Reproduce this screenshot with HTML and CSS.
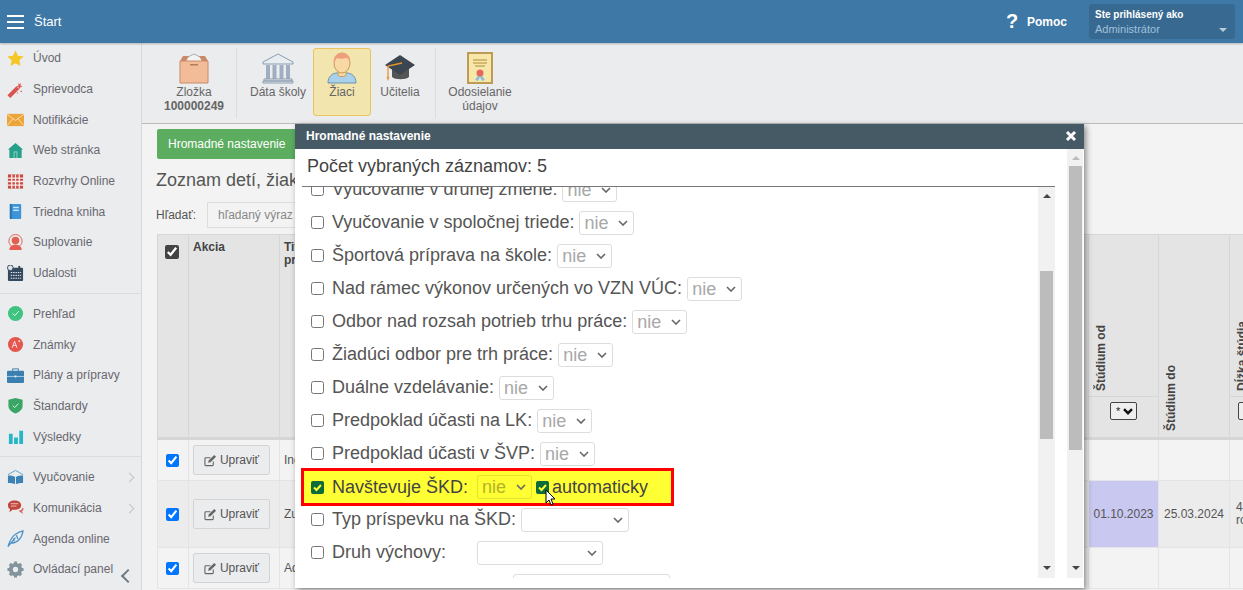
FILE: index.html
```html
<!DOCTYPE html>
<html lang="sk">
<head>
<meta charset="utf-8">
<title>Štart</title>
<link rel="stylesheet" href="styles.css">
</head>
<body>
<header class="topbar">
  <div class="burger"><span></span><span></span><span></span></div>
  <div class="brand">Štart</div>
  <div class="help"><b>?</b><span>Pomoc</span></div>
  <div class="user">
    <div class="user-top">Ste prihlásený ako</div>
    <div class="user-name">Administrátor</div>
    <i class="caret"></i>
  </div>
</header>
<div class="main">
  <nav class="side">
    <a class="nav"><svg viewBox="0 0 18 18"><path fill="#f5c724" d="M9 .5l2.600 5.600 6 .7-4.500 4.100 1.200 6L9 14l-5.300 2.900 1.200-6L.4 6.800l6-.7z"/></svg>Úvod</a>
    <a class="nav"><svg viewBox="0 0 18 18"><path fill="#d9534f" d="M.5 15L10 5.500l3 3L3.500 18z"/><path fill="#e8574d" d="M12 1l.8 2.500L15 2.500l-.8 2.300 2.300.8-2.300 1-1 2-1-2-2-.8 2-1zM15 10l1 1-1 1-1-1zM11 12l.8.8-.8.8-.8-.8z"/></svg>Sprievodca</a>
    <a class="nav"><svg viewBox="0 0 18 18"><rect y="3" width="18" height="13" fill="#eda53b"/><path fill="none" stroke="#fbe1a8" d="M0 3.500l9 6.500 9-6.500M0 15.500l6.500-7.500M18 15.500l-6.500-7.500"/></svg>Notifikácie</a>
    <a class="nav"><svg viewBox="0 0 18 18"><path fill="#27a08a" d="M9 1l8 7h-1.500v9h-13V8H1z"/><rect x="7" y="10" width="4" height="7" fill="#8fd6c8"/><rect x="8" y="11" width="2" height="6" fill="#27a08a"/></svg>Web stránka</a>
    <a class="nav"><svg viewBox="0 0 18 18"><rect x="1" y="1.500" width="16" height="15" fill="#c9483f"/><path stroke="#fbe9e7" stroke-width="1.400" d="M1 5.500h16M1 9h16M1 12.800h16M5 1.500v15M9 1.500v15M13 1.500v15"/></svg>Rozvrhy Online</a>
    <a class="nav"><svg viewBox="0 0 18 18"><rect x="3" y="1" width="12" height="16" rx="1" fill="#3d94d6"/><rect x="3" y="1" width="2" height="16" fill="#2775b0"/><rect x="6.500" y="4" width="6" height="1.500" fill="#cfe6f7"/><rect x="6.500" y="7" width="6" height="1.500" fill="#cfe6f7"/></svg>Triedna kniha</a>
    <a class="nav"><svg viewBox="0 0 18 18"><circle cx="9" cy="7.500" r="7" fill="none" stroke="#e35d50"/><circle cx="9" cy="7" r="4" fill="#e35d50"/><path fill="#e35d50" d="M2.500 17c0-4 3-5.500 6.500-5.500s6.500 1.500 6.500 5.500z"/></svg>Suplovanie</a>
    <a class="nav"><svg viewBox="0 0 18 18"><rect x="1" y="3" width="16" height="14" rx="1" fill="#34495e"/><rect x="4" y="1" width="2" height="3" fill="#34495e"/><rect x="12" y="1" width="2" height="3" fill="#34495e"/><path stroke="#fff" stroke-dasharray="1.500 1" d="M4 8h11M4 11h11M4 14h11"/><circle cx="3.500" cy="3" r="3" fill="#dfe3e6" stroke="#34495e"/></svg>Udalosti</a>
    <div class="divider"></div>
    <a class="nav"><svg viewBox="0 0 18 18"><circle cx="9" cy="9" r="8" fill="#3fc380"/><path fill="none" stroke="#e6fff2" d="M6 9l2.200 2.300L12.500 6.500"/></svg>Prehľad</a>
    <a class="nav"><svg viewBox="0 0 18 18"><circle cx="9" cy="9" r="8" fill="#e4574c"/><path fill="none" stroke="#fde" d="M5.500 12.500L8 5.500l2.500 7M6.500 10h3.500M12 5.500h2M13 4.500v2"/></svg>Známky</a>
    <a class="nav"><svg viewBox="0 0 18 18"><rect x="6" y="2" width="6" height="3" fill="none" stroke="#3b7fb0"/><rect y="4" width="18" height="13" rx="1" fill="#3b7fb0"/><path stroke="#a9d0ea" d="M0 10h18"/><rect x="8" y="9" width="2" height="2" fill="#dcecf7"/></svg>Plány a prípravy</a>
    <a class="nav"><svg viewBox="0 0 18 18"><path fill="#3aa564" d="M9 1l7.500 2v6.500c0 3.800-3.500 6.500-7.500 8-4-1.500-7.500-4.200-7.500-8V3z"/><path fill="none" stroke="#d8f5e3" d="M6 9l2.200 2.200L12 7"/></svg>Štandardy</a>
    <a class="nav"><svg viewBox="0 0 18 18"><path fill="#25b5c9" d="M2 6h4v11H2zM7.500 10h4v7h-4zM13 3h4v14h-4z"/></svg>Výsledky</a>
    <div class="divider"></div>
    <a class="nav"><svg viewBox="0 0 18 18"><path fill="#3b82b5" d="M1 7c3 0 6 .2 7.500 1.500V16C7 15 4 14.700 1 14.700zM17 7c-3 0-6 .2-7.500 1.500V16c1.500-1 4.500-1.300 7.500-1.300z"/><path fill="none" stroke="#5f9fc9" d="M1 6l8-4.500L17 6"/></svg>Vyučovanie<i class="chev"></i></a>
    <a class="nav"><svg viewBox="0 0 18 18"><path fill="#c0473b" d="M8 1.500c4 0 7 2 7 5s-3 5-7 5H6l-3.500 2.500.8-3.300C1.500 9.800 1 8 1 6.500c0-3 3-5 7-5z"/><path fill="#d66a5f" d="M12 12.500l5 3.500-1-3c1-.8 1.500-2 1.500-3l-1-1c-.5 2-2 3.200-4.500 3.500z"/><path stroke="#f4c4bf" d="M4 5h8M4 7.500h6"/></svg>Komunikácia<i class="chev"></i></a>
    <a class="nav"><svg viewBox="0 0 18 18"><path fill="none" stroke="#4a90c9" stroke-width="1.300" d="M1 17.500C2.500 13 4 8 9 4.500c2.500-1.700 5.500-3 8-3.500-.5 3-1.500 6.500-4 9-3 3-6.500 4-9.500 4M1 17.500l8-9.500M6.500 9l1.500 3M10 5.500l1.500 4"/></svg>Agenda online</a>
    <a class="nav"><svg viewBox="0 0 18 18"><circle cx="9" cy="9" r="5" fill="none" stroke="#84949c" stroke-width="4"/><path stroke="#84949c" stroke-width="3.200" d="M9 .5v17M.5 9h17M3 3l12 12M15 3L3 15"/><circle cx="9" cy="9" r="2.800" fill="#ebecee"/></svg>Ovládací panel</a>
    <i class="collapse"></i>
  </nav>
  <div class="workspace">
    <div class="ribbon">
      <div class="rib-item rib-first">
        <svg viewBox="0 0 32 32"><path fill="#f3f3f3" stroke="#aab" d="M8 6l8-4 8 4v4H8z"/><path fill="#f3bc98" stroke="#c98a68" d="M2 9h28v22H2z"/><path fill="#c98a68" d="M2 9l3-5h6l-3 5zM30 9l-3-5h-6l3 5z"/><rect x="12" y="12" width="8" height="1.500" fill="#b87a58"/></svg>
        <span>Zložka</span><b>100000249</b>
      </div>
      <div class="rib-sep"></div>
      <div class="rib-item rib-school">
        <svg viewBox="0 0 32 32"><path fill="#e8edf2" stroke="#8b9bb0" d="M16 2L1 10v2h30v-2z"/><path fill="#a0aec2" d="M4 13h4v14H4zM10.500 13h4v14h-4zM17.500 13h4v14h-4zM24 13h4v14h-4z"/><path fill="#e8edf2" stroke="#8b9bb0" d="M2 27h28v2H2zM1 29h30v2H1z"/></svg>
        <span>Dáta školy</span>
      </div>
      <div class="rib-item rib-active">
        <svg viewBox="0 0 32 32"><path fill="#a9d1ec" stroke="#6d93ad" d="M2 31c0-7 5-10 9-10h10c4 0 9 3 9 10z"/><path fill="#f8d9a6" stroke="#c69c5a" d="M12 17h8v6c0 2-8 2-8 0z"/><ellipse cx="16" cy="11" rx="8" ry="10" fill="#f8d9a6" stroke="#c69c5a"/><path fill="#ef9f7c" d="M8 11C7 4 11 1 16 1s9 3 8 10c-1-3-2-5-4-5-3 1-7 1-9 0-1 1-2 3-3 5z"/></svg>
        <span>Žiaci</span>
      </div>
      <div class="rib-item rib-teach">
        <svg viewBox="0 0 32 32"><path fill="#555" d="M8 15h17v10c-3 3-14 3-17 0z"/><path fill="#3b4650" d="M16 3L31 13 16 23 1 13z"/><path fill="none" stroke="#e8962c" stroke-width="1.300" d="M18 11L4 14v11"/><path fill="#e8962c" d="M2.500 25h3L4 29z"/></svg>
        <span>Učitelia</span>
      </div>
      <div class="rib-sep"></div>
      <div class="rib-item rib-send">
        <svg viewBox="0 0 32 32"><rect x="4" y="1" width="24" height="30" fill="#f7e8a9" stroke="#bd9a55" stroke-width="2"/><path stroke="#c9a95e" stroke-width="1.300" d="M9 8h14M9 11h14M11 14h10"/><path fill="#8dc0e0" d="M11 28l4-6 2 1-3 6zM21 28l-4-6-2 1 3 6z"/><circle cx="16" cy="21" r="3.500" fill="#e4685c"/></svg>
        <span>Odosielanie údajov</span>
      </div>
    </div>
    <div class="content">
      <button class="btn-green">Hromadné nastavenie</button>
      <h1 class="title">Zoznam detí, žiakov a študentov</h1>
      <div class="search"><label>Hľadať:</label><input type="text" placeholder="hľadaný výraz"></div>
      <table class="grid">
        <colgroup><col class="c1"><col class="c2"><col class="c3"><col class="c4"><col class="c5"><col class="c6"></colgroup>
        <thead>
          <tr>
            <th class="th-check"><input type="checkbox" class="dark" checked></th>
            <th class="th-text">Akcia</th>
            <th class="th-text">Titul<br>pred</th>
            <th class="th-split"><div class="rot-wrap"><span class="rot">Štúdium od</span></div><div class="filter f-od"><select class="star"><option>*</option></select></div></th>
            <th class="th-rot"><span class="rot">Štúdium do</span></th>
            <th class="th-split"><div class="rot-wrap"><span class="rot">Dĺžka štúdia</span></div><div class="filter f-len"><select class="star"><option>*</option></select></div></th>
          </tr>
        </thead>
        <tbody>
          <tr class="r1">
            <td class="ctr"><input type="checkbox" checked></td>
            <td><button class="edit"><svg viewBox="0 0 14 14"><path fill="none" stroke="#666" stroke-width="1.200" d="M10 8v3.500a1 1 0 0 1-1 1H2a1 1 0 0 1-1-1V5a1 1 0 0 1 1-1h5"/><path fill="#666" d="M5 7l6-6 2 2-6 6-2.500.5z"/></svg>Upraviť</button></td>
            <td>Ing.</td><td></td><td></td><td></td>
          </tr>
          <tr class="r2">
            <td class="ctr"><input type="checkbox" checked></td>
            <td><button class="edit"><svg viewBox="0 0 14 14"><path fill="none" stroke="#666" stroke-width="1.200" d="M10 8v3.500a1 1 0 0 1-1 1H2a1 1 0 0 1-1-1V5a1 1 0 0 1 1-1h5"/><path fill="#666" d="M5 7l6-6 2 2-6 6-2.500.5z"/></svg>Upraviť</button></td>
            <td>Zuzana</td><td class="hl">01.10.2023</td><td class="date">25.03.2024</td><td class="len">4<br>roky</td>
          </tr>
          <tr class="r3">
            <td class="ctr"><input type="checkbox" checked></td>
            <td><button class="edit"><svg viewBox="0 0 14 14"><path fill="none" stroke="#666" stroke-width="1.200" d="M10 8v3.500a1 1 0 0 1-1 1H2a1 1 0 0 1-1-1V5a1 1 0 0 1 1-1h5"/><path fill="#666" d="M5 7l6-6 2 2-6 6-2.500.5z"/></svg>Upraviť</button></td>
            <td>Adam</td><td></td><td></td><td></td>
          </tr>
        </tbody>
      </table>
    </div>
  </div>
</div>

<section class="modal">
  <div class="modal-head"><span>Hromadné nastavenie</span><svg class="close" viewBox="0 0 12 12"><path stroke="#fff" stroke-width="3" d="M2 2l8 8M10 2l-8 8"/></svg></div>
  <div class="modal-wrap">
    <div class="modal-body">
      <div class="count">Počet vybraných záznamov: 5</div>
      <div class="list">
        <div class="rows">
          <div class="row row-cut"><input type="checkbox"><label>Vyučovanie v druhej zmene:</label><select disabled><option>nie</option></select></div>
          <div class="row"><input type="checkbox"><label>Vyučovanie v spoločnej triede:</label><select disabled><option>nie</option></select></div>
          <div class="row"><input type="checkbox"><label>Športová príprava na škole:</label><select disabled><option>nie</option></select></div>
          <div class="row"><input type="checkbox"><label>Nad rámec výkonov určených vo VZN VÚC:</label><select disabled><option>nie</option></select></div>
          <div class="row"><input type="checkbox"><label>Odbor nad rozsah potrieb trhu práce:</label><select disabled><option>nie</option></select></div>
          <div class="row"><input type="checkbox"><label>Žiadúci odbor pre trh práce:</label><select disabled><option>nie</option></select></div>
          <div class="row"><input type="checkbox"><label>Duálne vzdelávanie:</label><select disabled><option>nie</option></select></div>
          <div class="row"><input type="checkbox"><label>Predpoklad účasti na LK:</label><select disabled><option>nie</option></select></div>
          <div class="row"><input type="checkbox"><label>Predpoklad účasti v ŠVP:</label><select disabled><option>nie</option></select></div>
          <div class="row row-mark">
            <input type="checkbox" class="green" checked><label class="fixed">Navštevuje ŠKD:</label><select disabled><option>nie</option></select>
            <input type="checkbox" class="green auto" checked><span class="auto-text">automaticky</span>
            <svg class="cursor" viewBox="0 0 12 18"><path fill="#fff" stroke="#000" d="M1 1v13l3-3 2 5 2-1-2-5h4z"/></svg>
          </div>
          <div class="row"><input type="checkbox"><label>Typ príspevku na ŠKD:</label><select class="wide-a"><option></option></select></div>
          <div class="row"><input type="checkbox"><label class="fixed">Druh výchovy:</label><select class="wide-b"><option></option></select></div>
          <div class="row row-last"><select class="wide-c"><option></option></select></div>
        </div>
        <div class="track inner"><i class="up"></i><div class="thumb"></div><i class="down"></i></div>
      </div>
    </div>
    <div class="track outer"><i class="up"></i><div class="thumb"></div><i class="down"></i></div>
  </div>
</section>
</body>
</html>
```

FILE: styles.css
```css
* { box-sizing: border-box; }
html, body { margin: 0; height: 590px; overflow: hidden; }
body { font-family: "Liberation Sans", Arial, sans-serif; font-size: 12px; color: #555; background: #f3f3f3; display: flex; flex-direction: column; }

.topbar { flex: none; height: 43px; background: #3e78a6; display: flex; align-items: center; color: #fff; box-shadow: 0 1px 2px rgba(0,0,0,.25); position: relative; z-index: 2; }
.burger { width: 17px; margin-left: 7px; display: flex; flex-direction: column; gap: 4px; }
.burger span { height: 2px; background: #fff; }
.brand { margin-left: 10px; font-size: 13px; }
.help { margin-left: auto; display: flex; align-items: center; font-weight: bold; }
.help b { font-size: 20px; width: 26px; padding-left: 6px; }
.help span { margin-left: 1px; }
.user { width: 146px; height: 35px; margin: 0 8px 0 22px; background: #386a91; border-radius: 3px; padding: 4px 6px; position: relative; }
.user-top { font-size: 10px; font-weight: bold; line-height: 14px; }
.user-name { font-size: 11px; color: #9fc0dc; line-height: 15px; }
.caret { position: absolute; right: 8px; bottom: 7px; border: 4px solid transparent; border-top-color: #b9cbd9; border-bottom: 0; }

.main { flex: 1; display: flex; min-height: 0; }
.side { flex: none; width: 142px; background: #ebecee; border-right: 1px solid #d8d8d8; position: relative; color: #666; }
.nav { display: flex; align-items: center; height: 30.7px; padding-left: 7px; font-size: 12px; position: relative; color: #68686e; }
.nav svg { width: 17px; height: 17px; margin-right: 9px; flex: none; }
.divider { height: 1px; margin: 4px 0 5px; background: #dcdcdc; }
.chev { position: absolute; left: 126px; top: 12px; width: 7px; height: 7px; border-top: 1px solid #c4c4c4; border-right: 1px solid #c4c4c4; transform: rotate(45deg); }
.collapse { position: absolute; left: 123px; top: 528px; width: 10px; height: 10px; border-left: 2px solid #6d7a80; border-bottom: 2px solid #6d7a80; transform: rotate(45deg); }

.workspace { flex: 1; min-width: 0; display: flex; flex-direction: column; overflow: hidden; }
.ribbon { flex: none; height: 81px; background: #ebecee; border-bottom: 1px solid #bbb; display: flex; align-items: flex-start; padding: 5px 0 0 15px; }
.rib-item { display: flex; flex-direction: column; align-items: center; text-align: center; padding-top: 4px; height: 68px; line-height: 14px; color: #666; }
.rib-item svg { width: 32px; height: 32px; margin-bottom: 1px; flex: none; }
.rib-item b { color: #666; }
.rib-first { width: 74px; }
.rib-sep { width: 1px; height: 70px; background: #dcdcdc; flex: none; }
.rib-first + .rib-sep { margin-left: 5px; }
.rib-school { width: 76px; padding-left: 6px; }
.rib-active { width: 58px; background: #f2e5ae; border: 1px solid #eac45f; border-radius: 3px; padding-top: 3px; }
.rib-teach { width: 58px; margin-right: 6px; }
.rib-send { width: 76px; margin-left: 6px; }

.content { flex: 1; padding: 5px 0 0 15px; background: #f3f3f3; min-height: 0; }
.btn-green { display: block; height: 30px; width: 150px; background: #5cad5f; border: 0; border-radius: 2px; color: #fff; font: 12px "Liberation Sans", Arial, sans-serif; padding: 0 0 0 11px; text-align: left; }
.title { margin: 9px 0 0 -1px; font-size: 18px; font-weight: normal; line-height: 24px; color: #555; white-space: nowrap; }
.search { margin: 10px 0 0 -1px; display: flex; align-items: center; }
.search label { width: 51px; }
.search input { width: 240px; height: 26px; border: 1px solid #ddd; background: #f3f3f3; padding: 0 10px; font: 12px "Liberation Sans", Arial, sans-serif; }
.search input::placeholder { color: #888; }

.grid { margin-top: 6px; width: 1142px; table-layout: fixed; border-collapse: collapse; font-size: 12px; }
.c1 { width: 31px; } .c2 { width: 91px; } .c3 { width: 809px; } .c4 { width: 70px; } .c5 { width: 71px; } .c6 { width: 70px; }
.grid th { height: 204px; background: #e4e4e4; border: 1px solid #d6d6d6; border-bottom-width: 3px; padding: 0; vertical-align: top; }
.grid td { border: 1px solid #e4e4e4; padding: 0 4px; vertical-align: middle; color: #555; }
.th-check { padding: 10px 0 0 7px !important; text-align: left; }
.th-text { text-align: left; padding: 6px 4px !important; color: #444; line-height: 13px; }
.dark { display: block; width: 14px; height: 14px; margin: 0; accent-color: #444; }
.th-split { vertical-align: bottom !important; }
.rot-wrap { height: 161px; display: flex; align-items: flex-end; padding: 0 0 5px 5px; border-bottom: 1px solid #d6d6d6; }
.rot { writing-mode: vertical-rl; transform: rotate(180deg); font-weight: bold; color: #444; white-space: nowrap; line-height: 14px; }
.filter { height: 40px; padding-top: 5px; text-align: left; }
.f-od { padding-left: 21px; }
.f-len { padding-left: 8px; }
.star { appearance: none; display: block; width: 27px; height: 18px; border: 1px solid #444; border-radius: 2px; font: 11px "Liberation Sans", Arial, sans-serif; color: #222; background: #eee url("data:image/svg+xml,%3Csvg xmlns='http://www.w3.org/2000/svg' width='10' height='7'%3E%3Cpath fill='none' stroke='%23111' stroke-width='2.400' d='M1 1.200l4 4 4-4'/%3E%3C/svg%3E") no-repeat right 3px center; padding: 0 0 0 5px; }
.th-rot { vertical-align: bottom !important; padding: 0 0 3px 5px !important; text-align: left; }
.r1 td { height: 42px; background: #f3f3f3; }
.r2 td { height: 67px; background: #ececec; }
.r3 td { height: 41px; background: #f3f3f3; }
.ctr { padding: 0 !important; }
.ctr input { display: block; margin: 0 0 0 8px; width: 13px; height: 13px; }
.edit { display: flex; align-items: center; justify-content: center; width: 77px; height: 30px; background: #ebecee; border: 1px solid #d4d4d4; border-radius: 2px; color: #555; font: 12px "Liberation Sans", Arial, sans-serif; padding: 0; }
.edit svg { width: 13px; height: 13px; margin-right: 3px; }
.hl { background: #c8c8f0 !important; white-space: nowrap; text-align: center; padding: 0 !important; }
.date { white-space: nowrap; text-align: center; padding: 0 !important; }
.len { line-height: 13px; padding-left: 6px !important; }

.modal { position: absolute; left: 295px; top: 124px; width: 789px; height: 464px; background: #fff; box-shadow: 2px 2px 6px rgba(0,0,0,.45); display: flex; flex-direction: column; z-index: 5; }
.modal-head { flex: none; height: 25px; padding: 0 7px 2px 11px; background: #465a66; color: #fff; font-weight: bold; display: flex; align-items: center; justify-content: space-between; }
.close { width: 12px; height: 12px; }
.modal-wrap { flex: 1; display: flex; align-items: flex-start; min-height: 0; }
.modal-body { width: 772px; padding: 0 12px 0 6px; }
.count { height: 38px; margin-left: 1px; padding: 7px 0 0 5px; font-size: 18px; line-height: 21px; color: #444; border-bottom: 1px solid #777; }
.list { height: 391px; display: flex; overflow: hidden; }
.rows { flex: 1; min-width: 0; margin-top: -14px; }
.row { display: flex; align-items: center; height: 33px; padding-left: 10px; font-size: 18px; color: #555; white-space: nowrap; position: relative; }
.row input[type=checkbox] { margin: 0 8px 0 0; width: 13px; height: 13px; flex: none; }
.row label { margin-right: 5px; }
.row label.fixed { width: 138px; margin-right: 7px; }
.row select { appearance: none; width: 55px; height: 24px; border: 1px solid #ddd; border-radius: 3px; background: #fff url("data:image/svg+xml,%3Csvg xmlns='http://www.w3.org/2000/svg' width='10' height='6'%3E%3Cpath fill='none' stroke='%23666' stroke-width='1.600' d='M1 1l4 4 4-4'/%3E%3C/svg%3E") no-repeat right 5px center; font: 18px "Liberation Sans", Arial, sans-serif; color: #a8a8a8; padding: 0 0 0 4px; opacity: 1; }
.row-mark { width: 373px; height: 38px; margin: -2px 0 -3px; padding-left: 7px; background: #ffff33; border: 3px solid #f00; color: #444; }
.row-mark select { background-color: transparent; border-color: rgba(0,0,0,.1); color: #b3b32a; }
.row input.green { appearance: none; background: #0b6b3a url("data:image/svg+xml,%3Csvg xmlns='http://www.w3.org/2000/svg' viewBox='0 0 13 13'%3E%3Cpath fill='none' stroke='%23ffff33' stroke-width='2' d='M3 6.500l2.500 2.500L10 4'/%3E%3C/svg%3E") center/13px no-repeat; border-radius: 2px; }
.row input.auto { margin: 0 3px 0 4px; }
.auto-text { color: #444; }
.cursor { position: absolute; left: 241px; top: 18px; width: 12px; height: 18px; }
.wide-a { width: 108px !important; }
.wide-b { width: 126px !important; }
.wide-c { width: 157px !important; margin-left: 202px; }
.track { flex: none; width: 17px; background: #f1f1f1; position: relative; }
.track .thumb { position: absolute; left: 2px; width: 13px; background: #bcbcbc; }
.track.inner { height: 391px; }
.inner .thumb { top: 84px; height: 168px; }
.track.outer { width: 16px; height: 429px; }
.outer .thumb { top: 17px; height: 284px; width: 13px; }
.up, .down { position: absolute; left: 5px; border: 4px solid transparent; }
.up { top: 7px; border-top: 0; border-bottom: 4px solid #444; }
.down { bottom: 8px; border-bottom: 0; border-top: 4px solid #444; }
.outer .up { border-bottom-color: #bbb; }
```
